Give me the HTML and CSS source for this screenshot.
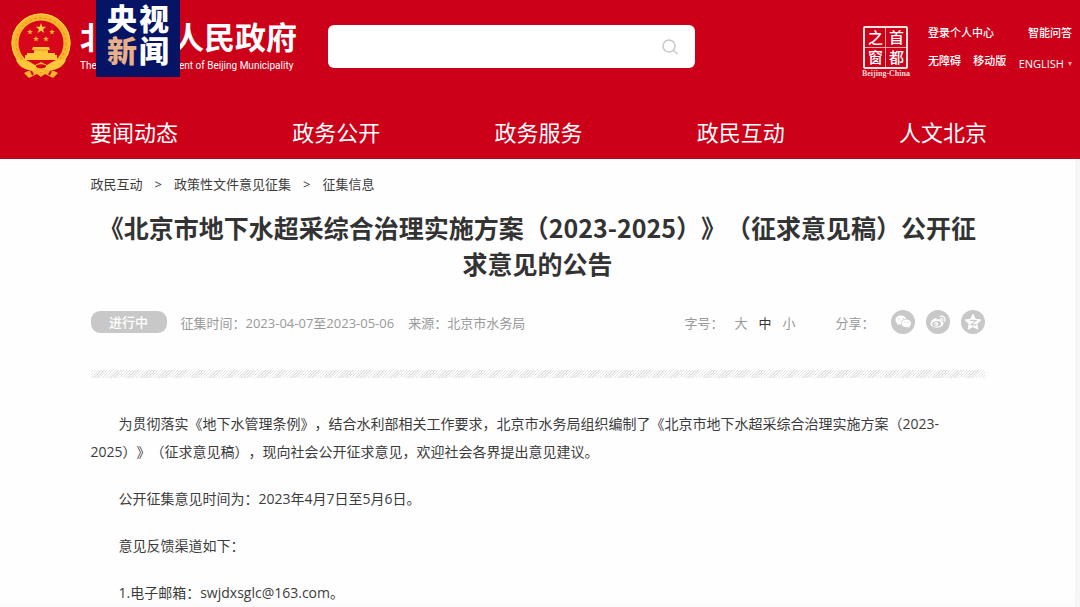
FILE: index.html
```html
<!DOCTYPE html>
<html lang="zh-CN">
<head>
<meta charset="utf-8">
<meta name="viewport" content="width=device-width, initial-scale=1">
<title>北京市人民政府</title>
<link rel="stylesheet" href="styles.css">
</head>
<body>
<header class="site-header">
  <div class="masthead">
    <a class="brand" href="#">
      <svg class="emblem" viewBox="0 0 62 66" aria-hidden="true">
        <circle cx="31" cy="30" r="26" fill="#d8061b" stroke="#f8b62d" stroke-width="7"/>
        <circle cx="31" cy="30" r="29" fill="none" stroke="#ffd34d" stroke-width="1"/>
        <circle cx="31" cy="30" r="25" fill="none" stroke="#f08a1c" stroke-width="1" stroke-dasharray="3 2"/>
        <path d="M31 10l1.300 3.800h4l-3.200 2.400 1.200 3.800-3.300-2.300-3.300 2.300 1.200-3.800-3.200-2.400h4z" fill="#ffcf3e"/>
        <g fill="#ffb52e">
          <path id="star" d="M20 16l.8 2 2.100.1-1.700 1.300.6 2.100-1.800-1.200-1.800 1.200.6-2.100-1.700-1.300 2.100-.1z"/>
          <use href="#star" x="22"/>
          <use href="#star" x="6" y="7"/>
          <use href="#star" x="16" y="7"/>
        </g>
        <path d="M23 34h16l1 3h-2v3h7v2h2v5H15v-5h2v-2h7v-3h-2z" fill="#ffc83a"/>
        <path d="M24 37h14" stroke="#f0901c" stroke-width="1"/>
        <path d="M6 47c8-1 15 1 19 6l6-4 6 4c4-5 11-7 19-6-3 7-10 11-18 10l-7-3-7 3C16 58 9 54 6 47z" fill="#ffc83a"/>
        <path d="M25 53c2-3 10-3 12 0-2 4-10 4-12 0z" fill="#d8061b" stroke="#ffc83a"/>
        <path d="M18 58l9-1 4 3 4-3 9 1 4 2-5 5-8-4-4 3-4-3-8 4-5-5z" fill="#fbb52c"/>
        <path d="M21 58l2 4M41 58l-2 4" stroke="#d8061b" stroke-width="2"/>
      </svg>
      <span class="brand-text">
        <span class="brand-name">北京市人民政府</span>
        <span class="brand-en">The People's Government of Beijing Municipality</span>
      </span>
    </a>
    <div class="news-badge"><span>央</span><span>视</span><span class="accent">新</span><span>闻</span></div>
    <form class="search" role="search">
      <input class="search-input" type="search" aria-label="搜索">
      <button class="search-button" type="button" aria-label="搜索">
        <svg viewBox="0 0 18 18" width="18" height="18" fill="none" stroke="#c9c9c9" stroke-width="1.500" stroke-linecap="round"><circle cx="8" cy="8" r="6"/><path d="M12.500 12.500L16 15.500"/></svg>
      </button>
    </form>
    <div class="tools">
      <a class="seal" href="#" aria-label="首都之窗">
        <span class="seal-grid"><span>之</span><span>首</span><span>窗</span><span>都</span></span>
        <span class="seal-en">Beijing-China</span>
      </a>
      <div class="tool-links">
        <div class="tool-row"><a href="#">登录个人中心</a><a href="#">智能问答</a></div>
        <div class="tool-row"><a href="#">无障碍</a><a href="#">移动版</a><a class="english" href="#">ENGLISH<span class="caret"></span></a></div>
      </div>
    </div>
  </div>
  <nav class="main-nav">
    <a href="#">要闻动态</a><a href="#">政务公开</a><a href="#">政务服务</a><a href="#">政民互动</a><a href="#">人文北京</a>
  </nav>
</header>
<main class="page">
  <article class="content">
    <nav class="crumbs"><a href="#">政民互动</a><span>&gt;</span><a href="#">政策性文件意见征集</a><span>&gt;</span><a href="#">征集信息</a></nav>
    <h1 class="title">《北京市地下水超采综合治理实施方案（2023-2025）》（征求意见稿）公开征求意见的公告</h1>
    <div class="meta">
      <span class="status">进行中</span>
      <span class="period">征集时间：2023-04-07至2023-05-06</span>
      <span>来源：北京市水务局</span>
      <div class="sizes"><span>字号：</span><button type="button">大</button><button class="active" type="button">中</button><button type="button">小</button></div>
      <div class="share">
        <span class="share-label">分享：</span>
        <a href="#" aria-label="微信"><svg viewBox="0 0 24 24"><circle cx="12" cy="12" r="12" fill="#c8c8c8"/><path d="M10 5.500c-3.300 0-5.500 2-5.500 4.500 0 1.500.8 2.700 2 3.500L6 15.200l2.100-1c.7.200 1.300.3 2 .3-.8-3.500 1.800-5.700 5.200-5.500C14.600 7 12.600 5.500 10 5.500z" fill="#fff"/><path d="M15.200 9.500c-2.700 0-4.700 1.700-4.700 3.900s2 3.900 4.700 3.900c.6 0 1.100-.1 1.600-.2l1.800.9-.4-1.600c1.100-.7 1.800-1.800 1.800-3 0-2.200-2.100-3.900-4.800-3.900z" fill="#fff"/><g fill="#c8c8c8"><circle cx="8" cy="8.800" r=".7"/><circle cx="12" cy="8.600" r=".7"/><circle cx="14" cy="12.300" r=".6"/><circle cx="17" cy="12.300" r=".6"/></g></svg></a>
        <a href="#" aria-label="微博"><svg viewBox="0 0 24 24"><circle cx="12" cy="12" r="12" fill="#c8c8c8"/><path d="M10.500 9.500c.8-1.800-1-1.900-3-.5-1.700 1.200-3 3-3 4.600 0 2.600 3 4.100 6.200 4.100 4 0 6.800-2.200 6.800-4.200 0-1.300-1-1.900-2-2.200.4-1.900-.9-2.600-5-1.800z" fill="#fff"/><ellipse cx="10.600" cy="13.800" rx="4.400" ry="2.800" fill="#c8c8c8" transform="rotate(-8 10.600 13.800)"/><circle cx="10.200" cy="14" r="2" fill="#fff"/><circle cx="9.800" cy="14.300" r=".8" fill="#c8c8c8"/><path d="M14 6.300c3.500-.8 5.700 1.700 4.800 5M14.500 8.600c1.600-.3 2.500.7 2.100 2.200" fill="none" stroke="#fff" stroke-width="1.200" stroke-linecap="round"/></svg></a>
        <a href="#" aria-label="QQ空间"><svg viewBox="0 0 24 24"><circle cx="12" cy="12" r="12" fill="#c8c8c8"/><path d="M12 4.300l2.300 5 5.500.7-4 3.800 1 5.400-4.800-2.600-4.800 2.600 1-5.400-4-3.800 5.500-.7z" fill="#fff" stroke="#fff" stroke-linejoin="round"/><path d="M9 10.700c2-.5 4-.5 6-.1l-5 4c1.700.4 3.500.4 5.400.1" fill="none" stroke="#c8c8c8" stroke-width="1.200"/></svg></a>
      </div>
    </div>
    <div class="divider"></div>
    <div class="body-text">
      <p>为贯彻落实《地下水管理条例》，结合水利部相关工作要求，北京市水务局组织编制了《北京市地下水超采综合治理实施方案（2023-2025）》（征求意见稿），现向社会公开征求意见，欢迎社会各界提出意见建议。</p>
      <p>公开征集意见时间为：2023年4月7日至5月6日。</p>
      <p>意见反馈渠道如下：</p>
      <p>1.电子邮箱：swjdxsglc@163.com。</p>
    </div>
  </article>
</main>
</body>
</html>
```

FILE: styles.css
```css
* { box-sizing: border-box; }
html { min-height: 100%; background: #fefefe; }
body {
  margin: 0;
  min-height: 100vh;
  overflow: hidden;
  display: flex;
  flex-direction: column;
  font-family: "Open Sans", "Noto Sans CJK SC", sans-serif;
  color: #3c3c3c;
  text-spacing-trim: space-all;
}
a { color: inherit; text-decoration: none; }
button { font: inherit; color: inherit; background: none; border: 0; padding: 0; cursor: pointer; }

.site-header { background: #cd0019; color: #fff; border-bottom: 1px solid #a90d20; }
.masthead {
  position: relative;
  display: flex;
  align-items: flex-start;
  height: 107px;
  padding: 0 8px 0 10px;
}
.brand { display: flex; width: 318px; flex: none; gap: 8px; padding-top: 13px; }
.emblem { width: 62px; height: 66px; flex: none; }
.brand-text { display: flex; flex-direction: column; white-space: nowrap; padding-top: 4px; }
.brand-name { font-size: 31px; line-height: 40px; font-weight: 700; }
.brand-en { font-family: Roboto, sans-serif; font-size: 10px; line-height: 18px; }
.news-badge {
  position: absolute;
  left: 96px;
  top: 0;
  width: 84px;
  height: 77px;
  padding: 3px 10px 9px;
  display: grid;
  grid-template-columns: 32px 32px;
  grid-template-rows: 32px 32px;
  place-items: center;
  background: #051464;
  font-size: 30px;
  line-height: 32px;
  font-weight: 900;
}
.news-badge .accent { color: #e8b08a; }
.search {
  display: flex;
  width: 367px;
  height: 43px;
  margin-top: 25px;
  background: #fff;
  border-radius: 6px;
}
.search-input { flex: 1; min-width: 0; border: 0; background: none; padding: 0 16px; font: inherit; font-size: 14px; outline: none; }
.search-button { width: 50px; display: grid; place-items: center; }

.tools { display: flex; gap: 18px; margin-left: auto; padding-top: 24px; }
.seal { display: flex; flex-direction: column; align-items: center; padding-top: 2px; }
.seal-grid {
  display: grid;
  grid-template-columns: 20px 20px;
  gap: 1px;
  border: 2px solid #ffe3e0;
  border-radius: 2px;
  background: #f2a5a5;
}
.seal-grid span {
  height: 19px;
  background: #cd0019;
  font-size: 15px;
  line-height: 19px;
  text-align: center;
  font-weight: 500;
}
.seal-en { font: 700 8px/9px "Liberation Serif", serif; color: #ffd9d6; }
.tool-links { width: 144px; font-size: 11px; line-height: 18px; font-weight: 500; white-space: nowrap; }
.tool-row { display: flex; justify-content: space-between; margin-bottom: 10px; }
.english { display: flex; align-items: center; gap: 4px; padding-top: 3px; }
.caret { border: 2px solid transparent; border-top: 4px solid #f3a0a4; border-bottom: 0; }

.main-nav {
  display: flex;
  justify-content: space-between;
  padding: 0 93px 0 90px;
  font-size: 22px;
  line-height: 51px;
}
.page { flex: 1; border-right: 5px solid #f6f6f6; background: linear-gradient(to top, #f5f5f5, #fefefe 28px); }
.content { max-width: 894px; margin: 0 auto; }
.crumbs { display: flex; gap: 12px; padding-top: 15px; font-size: 13px; line-height: 20px; }
.title {
  margin: 15px 0 0;
  font-family: "Noto Sans CJK SC", sans-serif;
  font-size: 25px;
  line-height: 36px;
  font-weight: 700;
  text-align: center;
  color: #333;
}
.meta { display: flex; align-items: center; margin-top: 29px; height: 24px; gap: 14px; font-size: 13px; color: #999; white-space: nowrap; }
.status {
  width: 76px;
  border-radius: 9px;
  background: #c8c8c8;
  color: #fff;
  line-height: 22px;
  text-align: center;
  font-weight: 500;
}
.sizes { display: flex; align-items: center; gap: 11px; margin-left: auto; }
.sizes .active { color: #333; }
.share { display: flex; align-items: center; gap: 11px; margin-left: 26px; }
.share-label { margin-right: 5px; }
.share a, .share svg { display: block; width: 24px; height: 24px; }
.divider {
  height: 8px;
  margin-top: 36px;
  background: repeating-linear-gradient(135deg, #fefefe 0 1px, #e4e4e4 1px 2px);
}
.body-text { margin-top: 32px; font-size: 14px; line-height: 28px; }
.body-text p { margin: 0 0 19px; text-indent: 2em; }
```
